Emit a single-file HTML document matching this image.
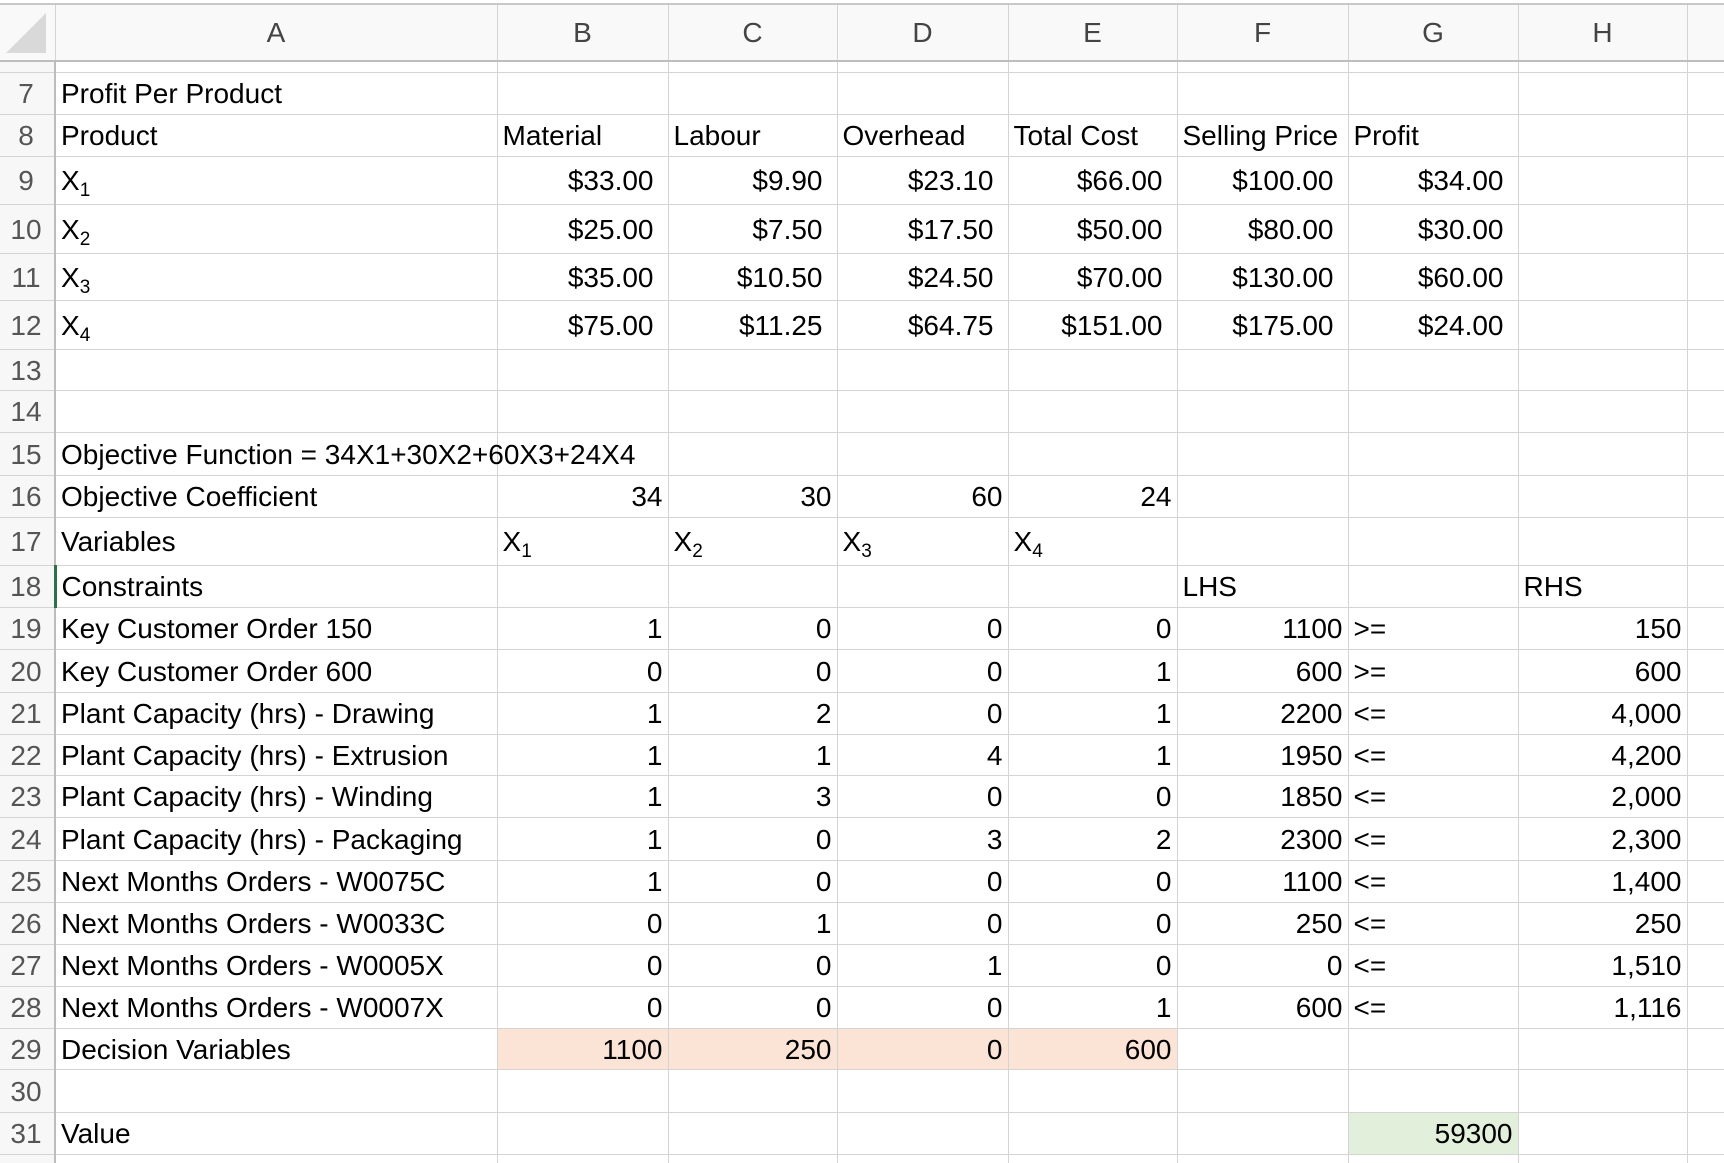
<!DOCTYPE html>
<html><head><meta charset="utf-8"><style>
html,body{margin:0;padding:0;background:#fff;width:1724px;height:1163px;overflow:hidden}
body{font-family:"Liberation Sans",sans-serif;position:relative}
table{border-collapse:collapse;table-layout:fixed;position:absolute;left:0;top:3px;width:1747px}
td{border:1px solid #d4d4d4;padding:2px 6px 0 5px;font-size:28px;color:#000;white-space:nowrap;overflow:visible;vertical-align:middle;line-height:32px;box-sizing:border-box}
td.r{text-align:right;padding-right:5px}
td.c{text-align:right;padding-right:14px}
td.rh{color:#555;text-align:center;padding:2px 2px 0 0;background:#f7f7f7;border-right:2px solid #bdbdbd;border-left:none;font-size:28px}
tr.hd td{background:#f9f9f9;color:#444;text-align:center;vertical-align:middle;border-bottom:2px solid #bdbdbd;border-top:2px solid #c8c8c8;padding:0;font-size:28px}
.o{background:#fbe4d5}
.g{background:#e2efda}
sub{font-size:19px;vertical-align:-6px;line-height:0}
.sel{color:#2e7145}
td.selA{border-left:3px solid #2e7145}
</style></head><body>
<table>
<colgroup><col style="width:55px"><col style="width:442px"><col style="width:171px"><col style="width:169px"><col style="width:171px"><col style="width:169px"><col style="width:171px"><col style="width:170px"><col style="width:169px"><col style="width:60px"></colgroup>
<tr class="hd" style="height:57px"><td style="border-left:none;background:#f9f9f9;position:relative"><svg width="46" height="44" style="position:absolute;left:4px;top:6px"><polygon points="42,2 42,42 2,42" fill="#d9d9d9"/></svg></td><td>A</td><td>B</td><td>C</td><td>D</td><td>E</td><td>F</td><td>G</td><td>H</td><td></td></tr>
<tr style="height:11px"><td class="rh" style="padding:0;font-size:1px;line-height:1px"></td><td style="padding:0;line-height:1px"></td><td></td><td></td><td></td><td></td><td></td><td></td><td></td><td></td></tr>
<tr style="height:42px"><td class="rh">7</td><td>Profit Per Product</td><td></td><td></td><td></td><td></td><td></td><td></td><td></td><td></td></tr>
<tr style="height:42px"><td class="rh">8</td><td>Product</td><td>Material</td><td>Labour</td><td>Overhead</td><td>Total Cost</td><td>Selling Price</td><td>Profit</td><td></td><td></td></tr>
<tr style="height:48px"><td class="rh">9</td><td>X<sub>1</sub></td><td class="c">$33.00</td><td class="c">$9.90</td><td class="c">$23.10</td><td class="c">$66.00</td><td class="c">$100.00</td><td class="c">$34.00</td><td></td><td></td></tr>
<tr style="height:49px"><td class="rh">10</td><td>X<sub>2</sub></td><td class="c">$25.00</td><td class="c">$7.50</td><td class="c">$17.50</td><td class="c">$50.00</td><td class="c">$80.00</td><td class="c">$30.00</td><td></td><td></td></tr>
<tr style="height:47px"><td class="rh">11</td><td>X<sub>3</sub></td><td class="c">$35.00</td><td class="c">$10.50</td><td class="c">$24.50</td><td class="c">$70.00</td><td class="c">$130.00</td><td class="c">$60.00</td><td></td><td></td></tr>
<tr style="height:49px"><td class="rh">12</td><td>X<sub>4</sub></td><td class="c">$75.00</td><td class="c">$11.25</td><td class="c">$64.75</td><td class="c">$151.00</td><td class="c">$175.00</td><td class="c">$24.00</td><td></td><td></td></tr>
<tr style="height:41px"><td class="rh">13</td><td></td><td></td><td></td><td></td><td></td><td></td><td></td><td></td><td></td></tr>
<tr style="height:42px"><td class="rh">14</td><td></td><td></td><td></td><td></td><td></td><td></td><td></td><td></td><td></td></tr>
<tr style="height:43px"><td class="rh">15</td><td>Objective Function = 34X1+30X2+60X3+24X4</td><td></td><td></td><td></td><td></td><td></td><td></td><td></td><td></td></tr>
<tr style="height:42px"><td class="rh">16</td><td>Objective Coefficient</td><td class="r">34</td><td class="r">30</td><td class="r">60</td><td class="r">24</td><td></td><td></td><td></td><td></td></tr>
<tr style="height:48px"><td class="rh">17</td><td>Variables</td><td>X<sub>1</sub></td><td>X<sub>2</sub></td><td>X<sub>3</sub></td><td>X<sub>4</sub></td><td></td><td></td><td></td><td></td></tr>
<tr style="height:42px"><td class="rh sel">18</td><td class="selA">Constraints</td><td></td><td></td><td></td><td></td><td>LHS</td><td></td><td>RHS</td><td></td></tr>
<tr style="height:42px"><td class="rh">19</td><td>Key Customer Order 150</td><td class="r">1</td><td class="r">0</td><td class="r">0</td><td class="r">0</td><td class="r">1100</td><td>&gt;=</td><td class="r">150</td><td></td></tr>
<tr style="height:43px"><td class="rh">20</td><td>Key Customer Order 600</td><td class="r">0</td><td class="r">0</td><td class="r">0</td><td class="r">1</td><td class="r">600</td><td>&gt;=</td><td class="r">600</td><td></td></tr>
<tr style="height:42px"><td class="rh">21</td><td>Plant Capacity (hrs) - Drawing</td><td class="r">1</td><td class="r">2</td><td class="r">0</td><td class="r">1</td><td class="r">2200</td><td>&lt;=</td><td class="r">4,000</td><td></td></tr>
<tr style="height:41px"><td class="rh">22</td><td>Plant Capacity (hrs) - Extrusion</td><td class="r">1</td><td class="r">1</td><td class="r">4</td><td class="r">1</td><td class="r">1950</td><td>&lt;=</td><td class="r">4,200</td><td></td></tr>
<tr style="height:42px"><td class="rh">23</td><td>Plant Capacity (hrs) - Winding</td><td class="r">1</td><td class="r">3</td><td class="r">0</td><td class="r">0</td><td class="r">1850</td><td>&lt;=</td><td class="r">2,000</td><td></td></tr>
<tr style="height:43px"><td class="rh">24</td><td>Plant Capacity (hrs) - Packaging</td><td class="r">1</td><td class="r">0</td><td class="r">3</td><td class="r">2</td><td class="r">2300</td><td>&lt;=</td><td class="r">2,300</td><td></td></tr>
<tr style="height:42px"><td class="rh">25</td><td>Next Months Orders - W0075C</td><td class="r">1</td><td class="r">0</td><td class="r">0</td><td class="r">0</td><td class="r">1100</td><td>&lt;=</td><td class="r">1,400</td><td></td></tr>
<tr style="height:42px"><td class="rh">26</td><td>Next Months Orders - W0033C</td><td class="r">0</td><td class="r">1</td><td class="r">0</td><td class="r">0</td><td class="r">250</td><td>&lt;=</td><td class="r">250</td><td></td></tr>
<tr style="height:42px"><td class="rh">27</td><td>Next Months Orders - W0005X</td><td class="r">0</td><td class="r">0</td><td class="r">1</td><td class="r">0</td><td class="r">0</td><td>&lt;=</td><td class="r">1,510</td><td></td></tr>
<tr style="height:42px"><td class="rh">28</td><td>Next Months Orders - W0007X</td><td class="r">0</td><td class="r">0</td><td class="r">0</td><td class="r">1</td><td class="r">600</td><td>&lt;=</td><td class="r">1,116</td><td></td></tr>
<tr style="height:41px"><td class="rh">29</td><td>Decision Variables</td><td class="r o">1100</td><td class="r o">250</td><td class="r o">0</td><td class="r o">600</td><td></td><td></td><td></td><td></td></tr>
<tr style="height:43px"><td class="rh">30</td><td></td><td></td><td></td><td></td><td></td><td></td><td></td><td></td><td></td></tr>
<tr style="height:42px"><td class="rh">31</td><td>Value</td><td></td><td></td><td></td><td></td><td></td><td class="r g">59300</td><td></td><td></td></tr>
<tr style="height:14px"><td class="rh"></td><td></td><td></td><td></td><td></td><td></td><td></td><td></td><td></td><td></td></tr>
</table>
</body></html>
